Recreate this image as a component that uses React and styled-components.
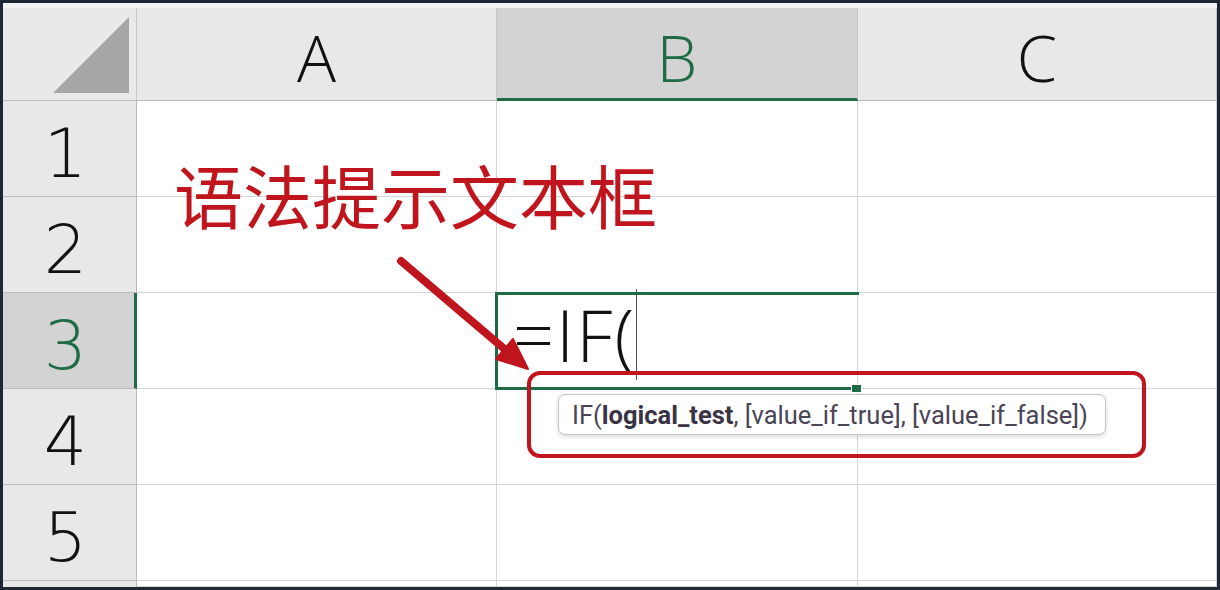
import React from 'react';
import styled, { createGlobalStyle } from 'styled-components';

const GREEN = '#1e6b45';
const RED = '#c0151d';

const GlobalStyle = createGlobalStyle`
  html, body { margin: 0; padding: 0; background: #ffffff; }
  body { font-family: "Open Sans", "Noto Sans", sans-serif; }
`;

const Frame = styled.div`
  position: relative;
  width: 1220px;
  height: 590px;
  box-sizing: border-box;
  border: 3px solid #1f2636;
  background: #efefef;
  display: flex;
  flex-direction: column;
  overflow: hidden;
`;

const TopStrip = styled.div`
  flex: 0 0 5px;
  background: #f2f2f2;
`;

const Sheet = styled.div`
  flex: 1;
  min-height: 0;
  overflow: hidden;
  display: grid;
  grid-template-columns: 134px 360px 361px 1fr;
  grid-template-rows: 93px repeat(5, 96px) minmax(0, 1fr);
`;

const Corner = styled.div`
  box-sizing: border-box;
  background: #e9e9e9;
  border-right: 1px solid #c6c6c6;
  border-bottom: 1px solid #bcbcbc;
  display: flex;
  justify-content: flex-end;
  align-items: flex-end;
  padding: 0 7px 7px 0;
`;

const Triangle = styled.div`
  width: 76px;
  height: 76px;
  background: #a6a6a6;
  clip-path: polygon(100% 0, 100% 100%, 0 100%);
`;

const ColHeader = styled.div`
  box-sizing: border-box;
  background: ${p => (p.$active ? '#d3d3d3' : '#e8e8e8')};
  color: ${p => (p.$active ? GREEN : '#111111')};
  border-right: 1px solid #c6c6c6;
  border-bottom: ${p => (p.$active ? `3px solid ${GREEN}` : '1px solid #bcbcbc')};
  display: flex;
  align-items: center;
  justify-content: center;
  padding-top: ${p => (p.$active ? '8px' : '6px')};
  font-family: "Open Sans", "Noto Sans", sans-serif;
  font-weight: 300;
  font-size: 65px;
  line-height: 1;
`;

const RowHeader = styled.div`
  box-sizing: border-box;
  overflow: hidden;
  background: ${p => (p.$active ? '#d3d3d3' : '#e8e8e8')};
  color: ${p => (p.$active ? GREEN : '#111111')};
  border-right: ${p => (p.$active ? `3px solid ${GREEN}` : '1px solid #b9b9b9')};
  border-bottom: 1px solid #bcbcbc;
  display: flex;
  align-items: center;
  justify-content: center;
  padding: 10px ${p => (p.$active ? '6px' : '8px')} 0 0;
  font-family: "DejaVu Sans", "Open Sans", sans-serif;
  font-weight: 200;
  font-size: 68px;
  line-height: 1;
`;

const Cell = styled.div`
  box-sizing: border-box;
  background: #ffffff;
  border-right: 1px solid #d6d6d6;
  border-bottom: 1px solid #d6d6d6;
`;

const EditCell = styled(Cell)`
  position: relative;
  display: flex;
  align-items: flex-end;
  padding: 0 0 0 16px;
  font-family: "Open Sans", "Noto Sans", sans-serif;
  font-weight: 300;
  font-size: 72px;
  line-height: 1;
  letter-spacing: 2px;
  color: #111111;
`;

const Formula = styled.span`
  display: block;
  margin-bottom: 8px;
`;

const Caret = styled.span`
  display: inline-block;
  width: 1px;
  height: 91px;
  margin-left: 0;
  vertical-align: -18px;
  background: #5b4d6b;
`;

const Selection = styled.div`
  position: absolute;
  top: -1px;
  left: -2px;
  right: -2px;
  bottom: -2px;
  border: 3px solid ${GREEN};
  border-right: none;
  pointer-events: none;
`;

const FillHandle = styled.div`
  position: absolute;
  right: -5px;
  bottom: -5px;
  width: 9px;
  height: 7px;
  background: ${GREEN};
  border: 1px solid #ffffff;
`;

const Overlay = styled.div`
  position: absolute;
  top: -3px;
  left: -3px;
  width: 1220px;
  height: 590px;
  pointer-events: none;
`;

const Tooltip = styled.div`
  position: absolute;
  left: 558px;
  top: 394px;
  width: 548px;
  height: 41px;
  box-sizing: border-box;
  background: #ffffff;
  border: 1px solid #c4c4c4;
  border-radius: 7px;
  box-shadow: 0 2px 5px rgba(0, 0, 0, 0.14);
  display: flex;
  align-items: center;
  padding-left: 13px;
  font-family: "Roboto", sans-serif;
  font-size: 25.5px;
  color: #4a4455;
  white-space: nowrap;
`;

const Arg = styled.b`
  font-weight: 700;
  color: #3a3344;
`;

const Callout = styled.div`
  position: absolute;
  left: 527px;
  top: 371px;
  width: 619px;
  height: 87px;
  box-sizing: border-box;
  border: 4px solid ${RED};
  border-radius: 13px;
`;

const Label = styled.div`
  position: absolute;
  left: 174px;
  top: 160px;
  font-family: "Noto Sans CJK SC", "Noto Sans", sans-serif;
  font-size: 69px;
  line-height: 1;
  color: ${RED};
  white-space: nowrap;
`;

const Arrow = styled.svg`
  position: absolute;
  top: 0;
  left: 0;
`;

const cols = ['A', 'B', 'C'];
const rows = [1, 2, 3, 4, 5];

export default function App() {
  return (
    <>
      <GlobalStyle />
      <Frame>
        <TopStrip />
        <Sheet>
          <Corner>
            <Triangle />
          </Corner>
          {cols.map(c => (
            <ColHeader key={c} $active={c === 'B'}>{c}</ColHeader>
          ))}
          {rows.map(r => (
            <React.Fragment key={r}>
              <RowHeader $active={r === 3}>{r}</RowHeader>
              <Cell />
              {r === 3 ? (
                <EditCell>
                  <Formula>=IF(<Caret /></Formula>
                  <Selection />
                  <FillHandle />
                </EditCell>
              ) : (
                <Cell />
              )}
              <Cell />
            </React.Fragment>
          ))}
          <RowHeader />
          <Cell />
          <Cell />
          <Cell />
        </Sheet>
        <Overlay>
          <Tooltip>
            IF(<Arg>logical_test</Arg>, [value_if_true], [value_if_false])
          </Tooltip>
          <Label>语法提示文本框</Label>
          <Arrow width="1220" height="590" viewBox="0 0 1220 590">
            <line x1="401" y1="261" x2="508" y2="352" stroke={RED} strokeWidth="8" strokeLinecap="round" />
            <polygon points="528,369 496,359 513,339" fill={RED} stroke={RED} strokeWidth="2" strokeLinejoin="round" />
          </Arrow>
          <Callout />
        </Overlay>
      </Frame>
    </>
  );
}
